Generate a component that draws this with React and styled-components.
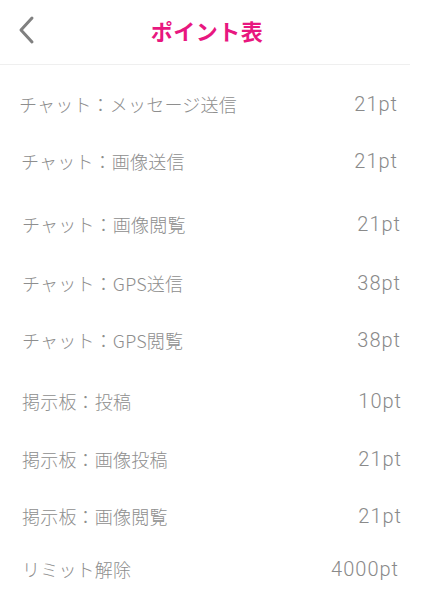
import React from "react";
import styled, { createGlobalStyle } from "styled-components";

const GlobalStyle = createGlobalStyle`
  html, body {
    margin: 0;
    padding: 0;
    background: #ffffff;
  }
  body {
    font-family: "Noto Sans CJK JP", "Noto Sans", sans-serif;
  }
`;

const Page = styled.div`
  width: 410px;
  min-height: 608px;
  background: #ffffff;
`;

const Header = styled.header`
  position: relative;
  height: 65px;
  display: flex;
  align-items: center;
  justify-content: center;
  padding-left: 4px;
  box-sizing: border-box;
  border-bottom: 1px solid #efefef;
`;

const BackButton = styled.button`
  position: absolute;
  left: 14px;
  top: 14px;
  width: 24px;
  height: 32px;
  padding: 0;
  border: 0;
  background: none;
  display: flex;
  align-items: center;
  justify-content: center;
`;

const Title = styled.h1`
  margin: 0 0 4px;
  font-size: 22px;
  font-weight: 700;
  color: #e8177f;
  letter-spacing: 0.5px;
`;

const List = styled.ul`
  list-style: none;
  margin: 0;
  padding: 27px 0 0;
`;

// 스크린샷이 이어붙인 것이라 행마다 간격/들여쓰기가 조금씩 다름
const Row = styled.li`
  height: 24px;
  margin-top: ${(p) => p.$space}px;
  padding-left: ${(p) => p.$indent}px;
  padding-right: ${(p) => p.$tail}px;
  display: flex;
  align-items: center;
  justify-content: space-between;
  color: #8e8e8e;
`;

const Label = styled.span`
  font-size: 18px;
  font-weight: 300;
  line-height: 24px;
  letter-spacing: 0.2px;
`;

const Points = styled.span`
  font-family: Roboto, "Liberation Sans", Arial, sans-serif;
  font-size: 20px;
  font-weight: 300;
  line-height: 24px;
  letter-spacing: 1px;
  color: #8a8a8a;
`;

const rows = [
  { label: "チャット：メッセージ送信", pt: "21pt", space: 0, indent: 19, tail: 12 },
  { label: "チャット：画像送信", pt: "21pt", space: 33, indent: 21, tail: 12 },
  { label: "チャット：画像閲覧", pt: "21pt", space: 39, indent: 22, tail: 9 },
  { label: "チャット：GPS送信", pt: "38pt", space: 35, indent: 22, tail: 9 },
  { label: "チャット：GPS閲覧", pt: "38pt", space: 33, indent: 22, tail: 9 },
  { label: "掲示板：投稿", pt: "10pt", space: 37, indent: 22, tail: 8 },
  { label: "掲示板：画像投稿", pt: "21pt", space: 34, indent: 22, tail: 8 },
  { label: "掲示板：画像閲覧", pt: "21pt", space: 33, indent: 22, tail: 8 },
  { label: "リミット解除", pt: "4000pt", space: 29, indent: 22, tail: 11 },
];

export default function App() {
  return (
    <>
      <GlobalStyle />
      <Page>
        <Header>
          <BackButton aria-label="戻る">
            <svg width="18" height="30" viewBox="0 0 18 30" fill="none">
              <path
                d="M15 3 L4 15 L15 27"
                stroke="#808080"
                strokeWidth="3"
                strokeLinecap="round"
                strokeLinejoin="round"
              />
            </svg>
          </BackButton>
          <Title>ポイント表</Title>
        </Header>
        <List>
          {rows.map((r) => (
            <Row key={r.label} $space={r.space} $indent={r.indent} $tail={r.tail}>
              <Label>{r.label}</Label>
              <Points>{r.pt}</Points>
            </Row>
          ))}
        </List>
      </Page>
    </>
  );
}
